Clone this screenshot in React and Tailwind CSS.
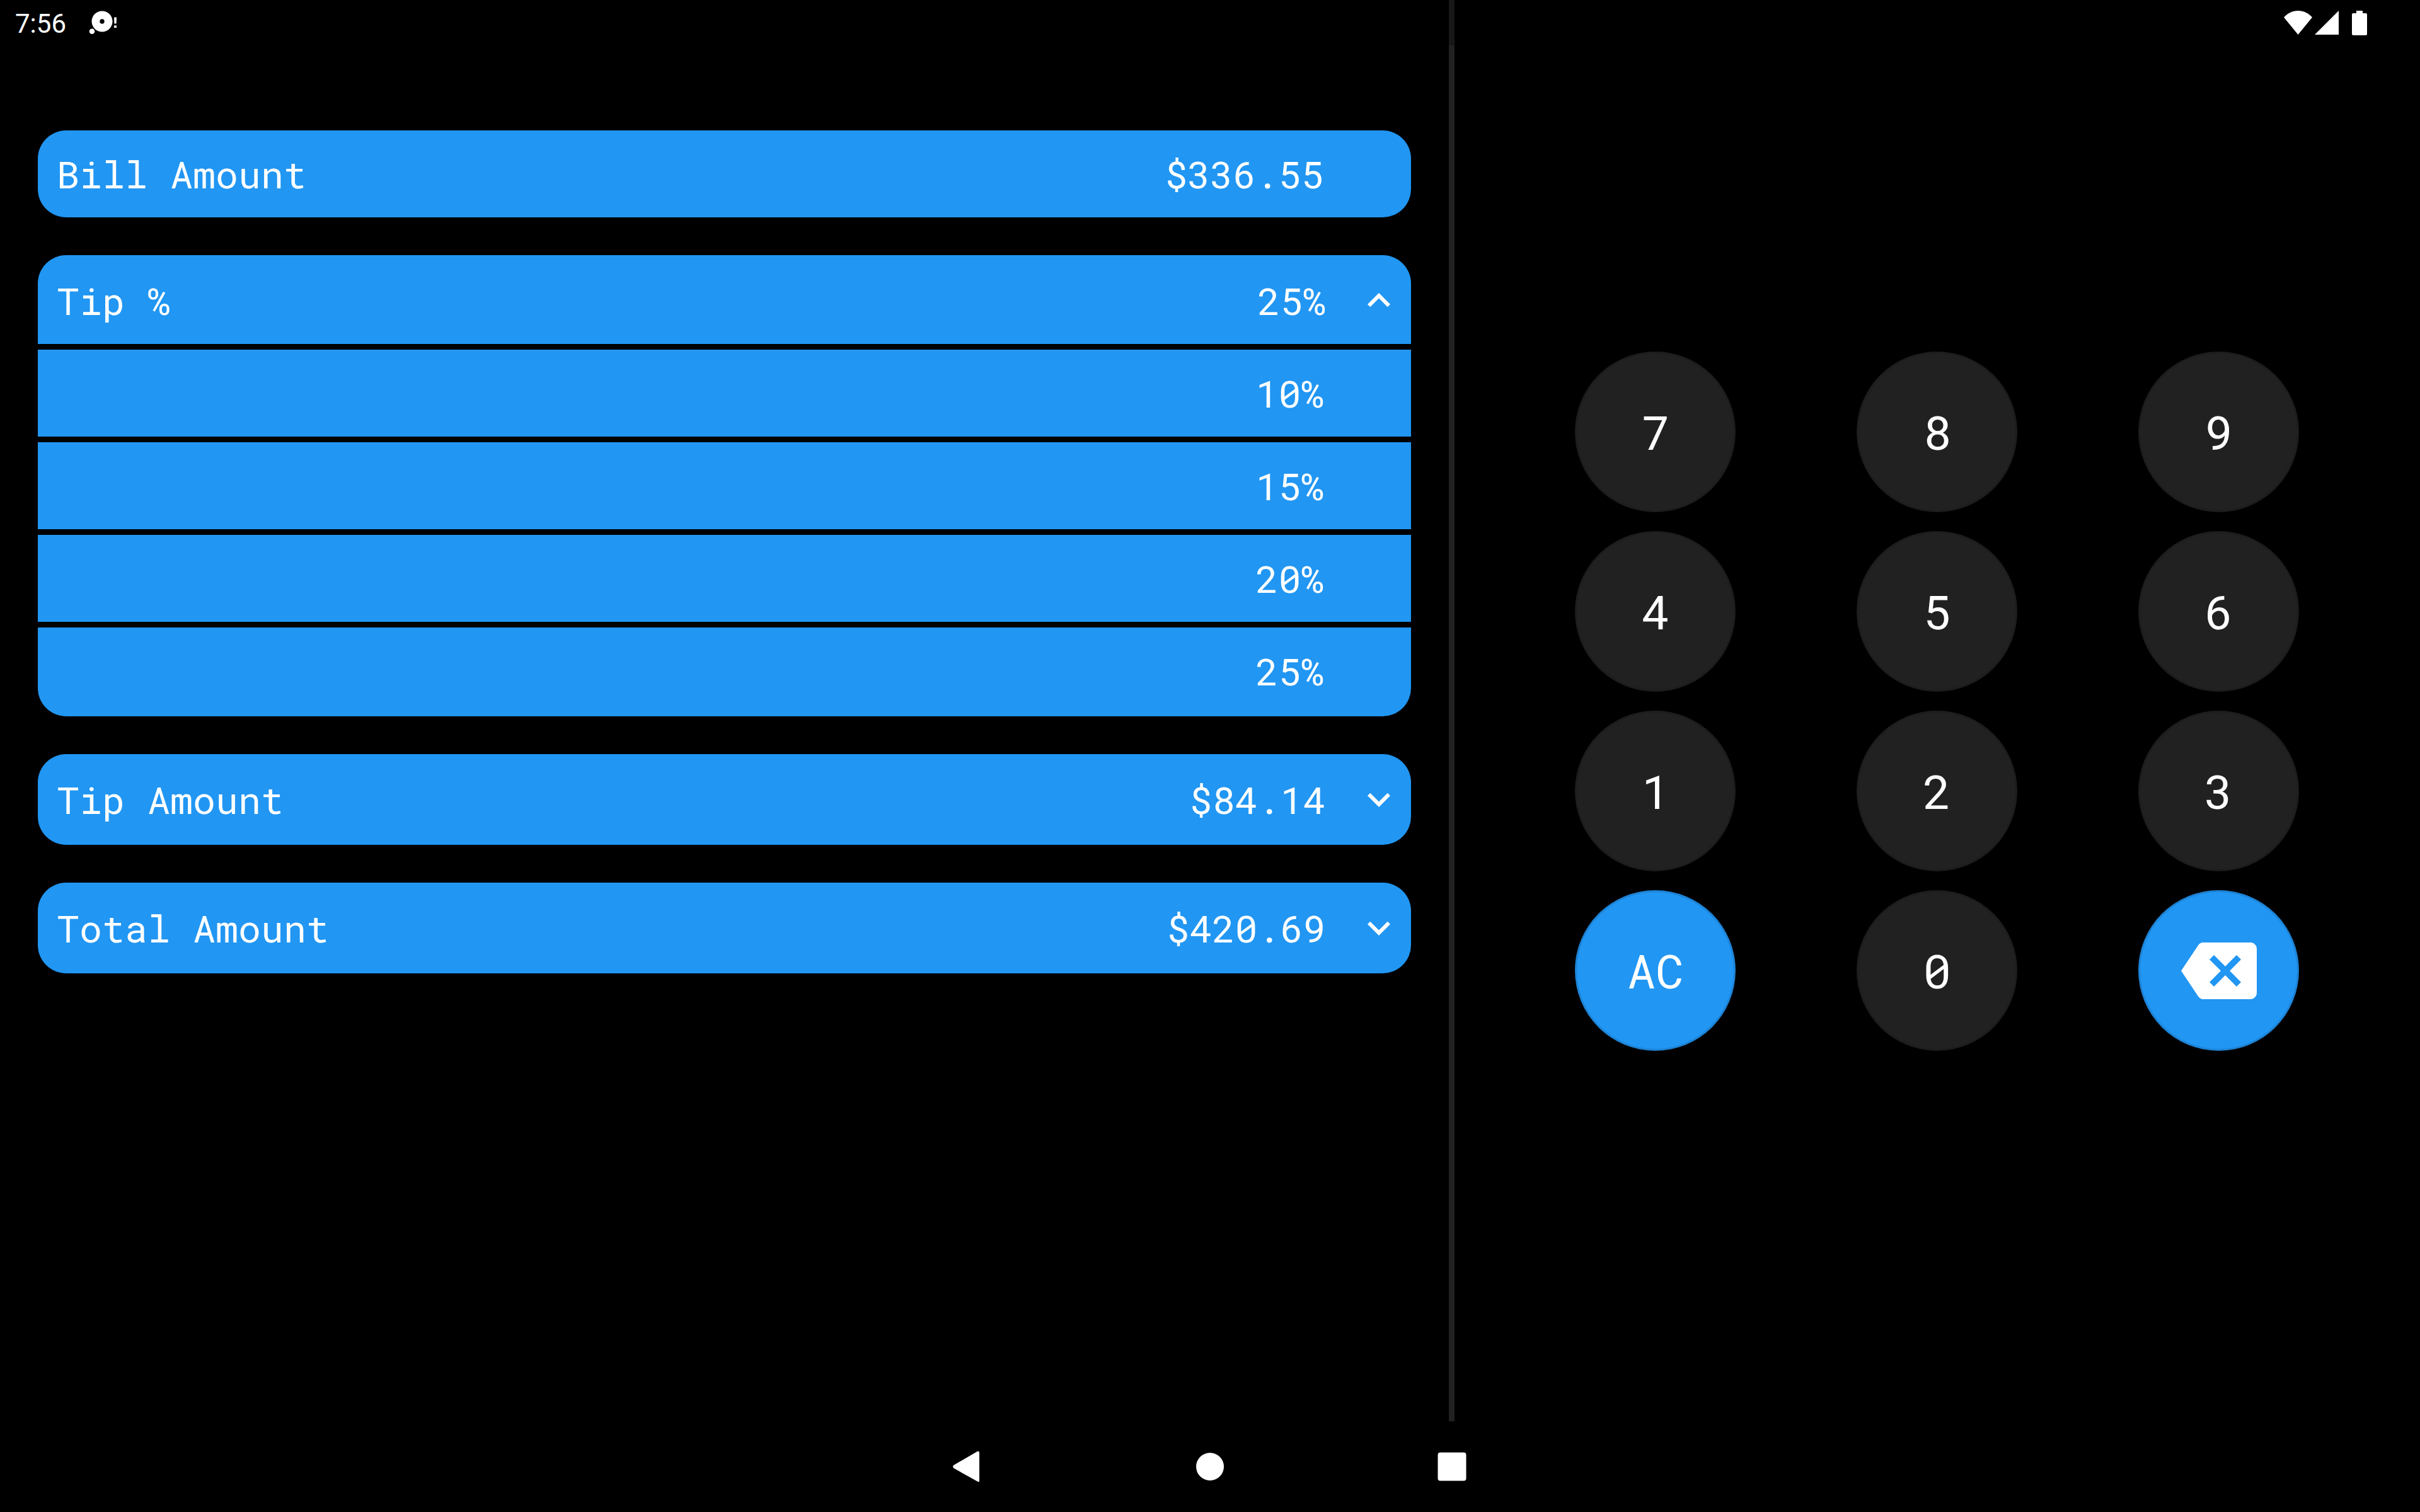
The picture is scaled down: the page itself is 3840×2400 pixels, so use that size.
import React from "react";

function ExpandIcon({ open }) {
  return (
    <svg viewBox="0 0 24 24" className="size-18 shrink-0 fill-white" aria-hidden="true">
      <path
        d={
          open
            ? "M12 8l-6 6 1.41 1.41L12 10.83l4.59 4.58L18 14z"
            : "M16.59 8.59L12 13.17 7.41 8.59 6 10l6 6 6-6z"
        }
      />
    </svg>
  );
}

function ExpandCard({ label, value, options, open }) {
  return (
    <section className="flex flex-col gap-[9px] overflow-hidden rounded-[45px]">
      <button
        type="button"
        aria-expanded={open}
        className={
          open
            ? "flex w-full items-center bg-[#2196f3] pt-[3px] pr-[15px] pl-[30px] text-left"
            : "flex w-full items-center bg-[#2196f3] py-[3px] pr-[15px] pl-[30px] text-left"
        }
      >
        <span className="flex-1 leading-[138px]">{label}</span>
        <span className="mr-12 leading-[138px]">{value}</span>
        <ExpandIcon open={open} />
      </button>
      {open &&
        options.map((o) => (
          <button
            key={o}
            type="button"
            className="w-full bg-[#2196f3] pr-[138px] text-right leading-[138px] last:pb-[3px]"
          >
            {o}
          </button>
        ))}
    </section>
  );
}

function Key({ children, label, accent }) {
  return (
    <button
      type="button"
      aria-label={label}
      className={
        "flex size-[255px] items-center justify-center rounded-full border-3 border-black/12 text-[75px] " +
        (accent ? "bg-[#2196f3]" : "bg-[#212121]")
      }
    >
      {children}
    </button>
  );
}

function KeyRow({ children }) {
  return <div className="mb-[30px] flex justify-evenly">{children}</div>;
}

function StatusBar() {
  return (
    <header className="absolute inset-x-0 top-0 flex h-18 items-center justify-between bg-black/25 pr-[84px] pl-6">
      <div className="flex items-center gap-9">
        <time className="pt-1 font-['Roboto',sans-serif] text-[42px] leading-[68px]">7:56</time>
        <svg viewBox="0 0 45 38" className="h-[38px] w-[45px] fill-white" aria-label="Notification">
          <path
            fillRule="evenodd"
            d="M21 0.5a16.5 16.5 0 1 0 0 33a16.5 16.5 0 1 0 0 -33zM21 13.3a3.7 3.7 0 1 1 0 7.4a3.7 3.7 0 1 1 0 -7.4z"
          />
          <circle cx="5" cy="32.7" r="4.3" />
          <path d="M40 10.5h4l-0.4 10h-3.2zM40 23.5h4v3.5h-4z" />
        </svg>
      </div>
      <div className="flex items-center">
        <svg viewBox="0 0 45 38" className="h-[38px] w-[45px] fill-white" aria-label="Wi-Fi">
          <path d="M0 10.5C6 4 14 0 22.5 0S39 4 45 10.5L22.5 38z" />
        </svg>
        <svg viewBox="0 0 38 38" className="ml-1 size-[38px] fill-white" aria-label="Signal">
          <path d="M0 38L38 0V38z" />
        </svg>
        <svg viewBox="0 0 24 39" className="ml-[21px] h-[39px] w-6 fill-white" aria-label="Battery">
          <path d="M7 0h10v4h5q2 0 2 2v31q0 2-2 2H2q-2 0-2-2V6q0-2 2-2h5z" />
        </svg>
      </div>
    </header>
  );
}

function NavBar() {
  return (
    <nav className="flex h-36 items-center justify-center">
      <button type="button" aria-label="Back" className="flex w-96 justify-center">
        <svg viewBox="0 0 72 72" className="size-18 fill-white">
          <path d="M51 11.7Q54 10.5 54 14V58Q54 61.5 51 59.5L13.5 38.5Q10.5 36 13.5 33.5z" />
        </svg>
      </button>
      <button type="button" aria-label="Home" className="flex w-96 justify-center">
        <svg viewBox="0 0 72 72" className="size-18 fill-white">
          <circle cx="36" cy="36" r="22" />
        </svg>
      </button>
      <button type="button" aria-label="Recent apps" className="flex w-96 justify-center">
        <svg viewBox="0 0 72 72" className="size-18 fill-white">
          <rect x="13.5" y="13.5" width="45" height="45" rx="4" />
        </svg>
      </button>
    </nav>
  );
}

export default function App() {
  return (
    <div className="relative flex min-h-screen flex-col bg-black font-['Roboto_Mono','DejaVu_Sans_Mono',monospace] text-white">
      <div className="grid flex-1 grid-cols-[3fr_9px_2fr]">
        <main className="flex flex-col gap-15 px-15 pt-[207px] text-[60px]">
          <div className="flex items-center rounded-[45px] bg-[#2196f3] pr-[138px] pl-[30px] leading-[138px]">
            <span className="flex-1">Bill Amount</span>
            <output>$336.55</output>
          </div>
          <ExpandCard label="Tip %" value="25%" open options={["10%", "15%", "20%", "25%"]} />
          <ExpandCard label="Tip Amount" value="$84.14" open={false} />
          <ExpandCard label="Total Amount" value="$420.69" open={false} />
        </main>
        <div className="bg-[#212121]" />
        <aside className="flex flex-col justify-center" aria-label="Keypad">
          <KeyRow>
            <Key>7</Key>
            <Key>8</Key>
            <Key>9</Key>
          </KeyRow>
          <KeyRow>
            <Key>4</Key>
            <Key>5</Key>
            <Key>6</Key>
          </KeyRow>
          <KeyRow>
            <Key>1</Key>
            <Key>2</Key>
            <Key>3</Key>
          </KeyRow>
          <KeyRow>
            <Key accent>AC</Key>
            <Key>0</Key>
            <Key accent label="Backspace">
              <svg viewBox="0 0 24 24" className="size-30 fill-white" aria-hidden="true">
                <path d="M22 3H7c-.69 0-1.23.35-1.59.88L0 12l5.41 8.11c.36.53.9.89 1.59.89h15c1.1 0 2-.9 2-2V5c0-1.1-.9-2-2-2zm-3 12.59L17.59 17 14 13.41 10.41 17 9 15.59 12.59 12 9 8.41 10.41 7 14 10.59 17.59 7 19 8.41 15.41 12 19 15.59z" />
              </svg>
            </Key>
          </KeyRow>
        </aside>
      </div>
      <NavBar />
      <StatusBar />
    </div>
  );
}
